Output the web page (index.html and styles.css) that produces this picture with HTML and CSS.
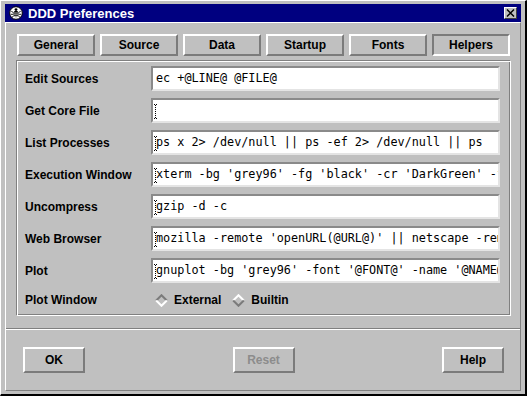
FILE: index.html
```html
<!DOCTYPE html>
<html>
<head>
<meta charset="utf-8">
<title>DDD Preferences</title>
<link rel="stylesheet" href="styles.css">
</head>
<body>

<div class="window">

	<div class="titlebar">
		<svg class="app_icon" width="14" height="14" viewBox="0 0 14 14">
			<circle cx="7" cy="7" r="6.3" fill="#fff" stroke="#000" stroke-width="1"/>
			<ellipse cx="7" cy="8" rx="2.6" ry="3.3" fill="#000"/>
			<circle cx="7" cy="3.6" r="1.4" fill="#000"/>
			<path d="M4.6 7h4.8M4.5 8.8h5M4.8 10.5h4.4" stroke="#fff" stroke-width="0.7"/>
			<path d="M4.4 6.5L2.3 5.3M4.3 8.3H2M4.6 10.2l-2 1.2M9.6 6.5l2.1-1.2M9.7 8.3H12M9.4 10.2l2 1.2" stroke="#000" stroke-width="0.9"/>
		</svg>
		<span class="title">DDD Preferences</span>
		<span class="close">
			<svg width="9" height="8" viewBox="0 0 9 8"><path d="M1 0.5l7 7M8 0.5l-7 7" stroke="#000" stroke-width="1.5"/></svg>
		</span>
	</div>

	<div class="client">

		<div class="tabs">
			<div class="tab">General</div>
			<div class="tab">Source</div>
			<div class="tab">Data</div>
			<div class="tab">Startup</div>
			<div class="tab">Fonts</div>
			<div class="tab active">Helpers</div>
		</div>

		<div class="panel">
			<span class="label">Edit Sources</span>
			<div class="field">ec +@LINE@ @FILE@</div>

			<span class="label">Get Core File</span>
			<div class="field caret"></div>

			<span class="label">List Processes</span>
			<div class="field caret">ps x 2> /dev/null || ps -ef 2> /dev/null || ps</div>

			<span class="label">Execution Window</span>
			<div class="field caret">xterm -bg 'grey96' -fg 'black' -cr 'DarkGreen' -fn '@FONT@' -title 'DDD: Execution Window' -e /bin/sh -c</div>

			<span class="label">Uncompress</span>
			<div class="field caret">gzip -d -c</div>

			<span class="label">Web Browser</span>
			<div class="field caret">mozilla -remote 'openURL(@URL@)' || netscape -remote 'openURL(@URL@)' || ${WWWBROWSER-false} '@URL@'</div>

			<span class="label">Plot</span>
			<div class="field caret">gnuplot -bg 'grey96' -font '@FONT@' -name '@NAME@' -geometry +0+0</div>

			<span class="label">Plot Window</span>
			<div class="radios">
				<span class="radio">
					<svg width="13" height="13" viewBox="0 0 13 13">
						<path d="M1.2 6.5L6.5 1.2L11.8 6.5" fill="none" stroke="#7b7b7b" stroke-width="2"/>
						<path d="M1.2 6.5L6.5 11.8L11.8 6.5" fill="none" stroke="#fff" stroke-width="2"/>
					</svg>
					External
				</span>
				<span class="radio">
					<svg width="13" height="13" viewBox="0 0 13 13">
						<path d="M1.2 6.5L6.5 1.2L11.8 6.5" fill="none" stroke="#fff" stroke-width="2"/>
						<path d="M1.2 6.5L6.5 11.8L11.8 6.5" fill="none" stroke="#7b7b7b" stroke-width="2"/>
					</svg>
					Builtin
				</span>
			</div>
		</div>

		<div class="separator"></div>

		<div class="buttons">
			<div class="button">OK</div>
			<div class="button disabled">Reset</div>
			<div class="button">Help</div>
		</div>

	</div>
</div>

</body>
</html>
```

FILE: styles.css
```css
body {
	margin: 0;
	background: #c0c0c0;
	font-family: "Liberation Sans", Arial, sans-serif;
	font-size: 12px;
	font-weight: bold;
	color: #000;
}

/* outer window frame */
.window {
	width: 527px;
	height: 396px;
	box-sizing: border-box;
	background: #c0c0c0;
	padding: 3px 4px 3px 4px;
	border-style: solid;
	border-width: 1px 2px 2px 1px;
	border-color: #fff #000 #000 #fff;
	display: flex;
	flex-direction: column;
}

.titlebar {
	height: 18px;
	background: #000080;
	display: flex;
	align-items: center;
	padding: 0 4px 0 4px;
	color: #fff;
}

.app_icon {
	margin-right: 5px;
}

.title {
	font-size: 13px;
	flex: 1;
}

.close {
	width: 13px;
	height: 12px;
	box-sizing: border-box;
	background: #c0c0c0;
	border-style: solid;
	border-width: 1px;
	border-color: #fff #404040 #404040 #fff;
	display: flex;
	align-items: center;
	justify-content: center;
}

.client {
	flex: 1;
	border-style: solid;
	border-width: 1px;
	border-color: #fff #808080 #808080 #fff;
	display: flex;
	flex-direction: column;
	padding: 11px 0 0 0;
}

/* tab buttons */
.tabs {
	display: flex;
	gap: 5px;
	margin-left: 11px;
}

.tab {
	width: 78px;
	height: 22px;
	box-sizing: border-box;
	border: 2px solid;
	border-color: #fff #7b7b7b #7b7b7b #fff;
	display: flex;
	align-items: center;
	justify-content: center;
}

.tab.active {
	border-color: #7b7b7b #fff #fff #7b7b7b;
}

/* etched panel with the helper rows */
.panel {
	margin: 4px 9px 0 10px;
	border: 1px solid;
	border-color: #808080 #fff #fff #808080;
	box-shadow: inset 1px 1px 0 #fff, inset -1px -1px 0 #808080;
	padding: 5px 10px 5px 8px;
	display: grid;
	grid-template-columns: 126px 1fr;
	row-gap: 7px;
	align-items: center;
}

.label {
	white-space: nowrap;
}

.field {
	position: relative;
	height: 25px;
	box-sizing: border-box;
	background: #fff;
	border: 2px solid;
	border-color: #8a8a8a #e4e4e4 #e4e4e4 #8a8a8a;
	padding: 0 3px;
	font-family: "DejaVu Sans Mono", "Liberation Mono", monospace;
	font-weight: normal;
	font-size: 11.8px;
	line-height: 21px;
	white-space: pre;
	overflow: hidden;
}

/* dotted I-beam at the start of the text */
.field.caret::before {
	content: "";
	position: absolute;
	left: 1px;
	top: 4px;
	width: 3px;
	height: 13px;
	border-top: 1px dotted #000;
	border-bottom: 1px dotted #000;
	background: repeating-linear-gradient(to bottom, #000 0 1px, transparent 1px 2px) center / 1px 100% no-repeat;
}

.radios {
	height: 20px;
	display: flex;
	align-items: center;
	padding-left: 4px;
	gap: 11px;
}

.radio {
	display: flex;
	align-items: center;
	gap: 6px;
}

.separator {
	margin-top: 12px;
	border-top: 1px solid #808080;
	border-bottom: 1px solid #fff;
	height: 0;
}

.buttons {
	display: flex;
	justify-content: space-between;
	padding: 0 16px 0 17px;
	margin-top: 17px;
}

.button {
	width: 62px;
	height: 26px;
	box-sizing: border-box;
	border: 2px solid;
	border-color: #fff #7b7b7b #7b7b7b #fff;
	display: flex;
	align-items: center;
	justify-content: center;
}

.button.disabled {
	color: #8c8c8c;
}
```
